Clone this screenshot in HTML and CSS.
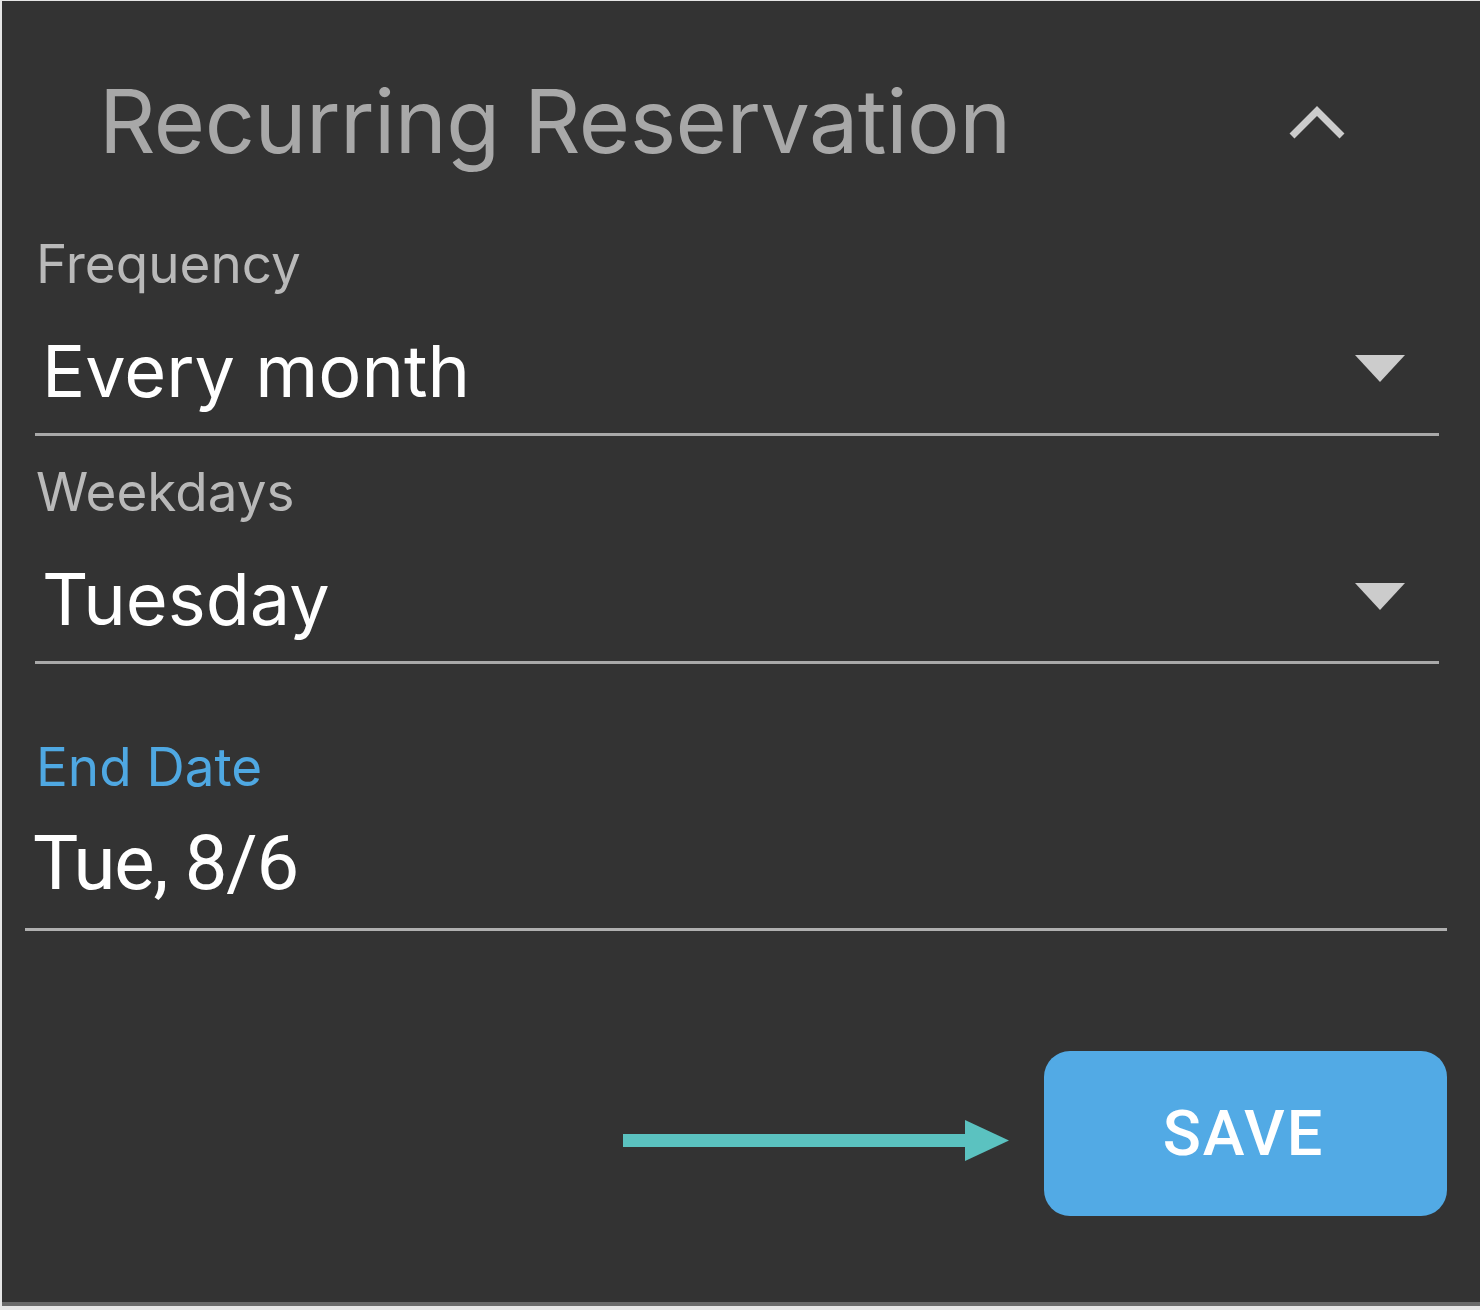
FILE: index.html
```html
<!DOCTYPE html>
<html>
<head>
<meta charset="utf-8">
<link rel="stylesheet" href="styles.css">
</head>
<body>
<div class="panel">
  <div class="header">
    <div class="title">Recurring Reservation</div>
    <svg class="chevron" width="60" height="40" viewBox="0 0 60 40"><path d="M5 33 L30 8 L55 33" fill="none" stroke="#cccccc" stroke-width="7"/></svg>
  </div>
  <div class="field">
    <div class="label">Frequency</div>
    <div class="select">
      <span class="value">Every month</span>
      <svg class="caret" width="52" height="30" viewBox="0 0 52 30"><polygon points="1,1 51,1 26,28" fill="#cccccc"/></svg>
    </div>
  </div>
  <div class="field second">
    <div class="label">Weekdays</div>
    <div class="select">
      <span class="value">Tuesday</span>
      <svg class="caret" width="52" height="30" viewBox="0 0 52 30"><polygon points="1,1 51,1 26,28" fill="#cccccc"/></svg>
    </div>
  </div>
  <div class="date-field">
    <div class="label blue">End Date</div>
    <div class="date-value">Tue, 8/6</div>
  </div>
  <div class="actions">
    <svg class="arrow" width="386" height="44" viewBox="0 0 386 44"><rect x="0" y="15" width="344" height="13" fill="#5bc2c0"/><polygon points="342,1 386,21.5 342,42" fill="#5bc2c0"/></svg>
    <button class="save">SAVE</button>
  </div>
</div>
</body>
</html>
```
FILE: styles.css
```css
html, body {
  margin: 0;
  padding: 0;
  background: #e6e6e6;
}
body {
  width: 1480px;
  height: 1310px;
  overflow: hidden;
}
.panel {
  box-sizing: border-box;
  margin: 1px 0 0 2px;
  width: 1478px;
  height: 1305px;
  background: #333333;
  font-family: Inter, "Noto Sans", sans-serif;
  display: flex;
  flex-direction: column;
  border-bottom: 4px solid #6a6a6a;
}
.header {
  display: flex;
  align-items: flex-start;
  justify-content: space-between;
  height: 233px;
  padding: 76px 133px 0 97px;
  box-sizing: border-box;
  flex-shrink: 0;
}
.title {
  font-size: 88px;
  line-height: 88px;
  color: #a8a8a8;
  font-weight: 400;
  letter-spacing: -0.5px;
}
.chevron {
  display: block;
  margin-top: 26px;
}
.field {
  margin: 0 41px 0 33px;
  flex-shrink: 0;
}
.field.second {
  margin-top: 26px;
}
.label {
  font-size: 53px;
  line-height: 60px;
  color: #b9b9b9;
  padding-left: 1px;
}
.label.blue {
  color: #4fa8e2;
}
.select {
  display: flex;
  align-items: flex-start;
  justify-content: space-between;
  height: 142px;
  border-bottom: 3px solid #a9a9a9;
  box-sizing: border-box;
  padding: 37px 33px 0 7px;
}
.value {
  font-size: 72px;
  line-height: 80px;
  color: #ffffff;
}
.caret {
  display: block;
  margin-top: 23px;
}
.date-field {
  margin: 73px 33px 0 23px;
  border-bottom: 3px solid #b0b0b0;
  height: 194px;
  box-sizing: border-box;
  flex-shrink: 0;
}
.date-field .label {
  padding-left: 11px;
}
.date-value {
  font-family: Roboto, "Liberation Sans", sans-serif;
  font-size: 76px;
  line-height: 100px;
  letter-spacing: -1.2px;
  color: #ffffff;
  padding-left: 8px;
  margin-top: 16px;
}
.actions {
  display: flex;
  align-items: center;
  justify-content: flex-end;
  margin-top: 120px;
  padding-right: 33px;
}
.arrow {
  display: block;
  margin-right: 35px;
  margin-top: 14px;
}
.save {
  width: 403px;
  height: 165px;
  border: none;
  border-radius: 26px;
  background: #52aae5;
  color: #ffffff;
  font-family: Roboto, "Liberation Sans", sans-serif;
  font-weight: 500;
  font-size: 63px;
  letter-spacing: 2px;
  padding: 0 4px 0 0;
}
```
